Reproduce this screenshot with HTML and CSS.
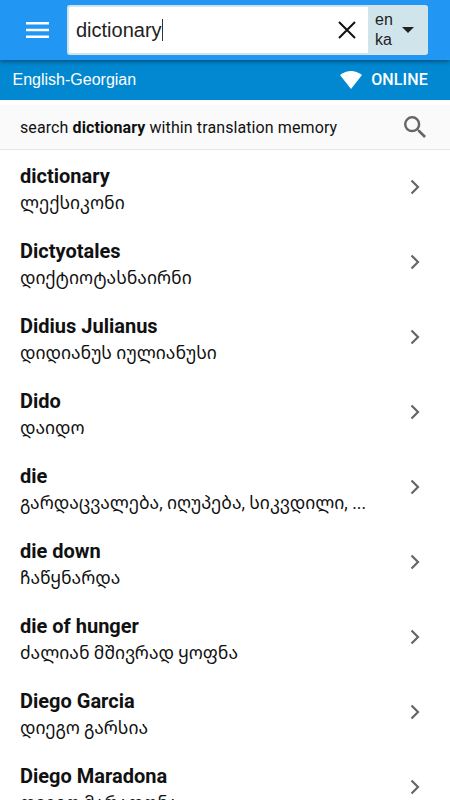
FILE: index.html
```html
<!DOCTYPE html>
<html lang="en">
<head>
<meta charset="utf-8">
<title>Dictionary</title>
<link rel="stylesheet" href="styles.css">
</head>
<body>
<header class="topbar">
  <svg class="menu" viewBox="0 0 23 16"><path d="M0 1.25h23M0 8h23M0 14.75h23"/></svg>
  <div class="search">
    <span class="query">dictionary</span><span class="caret"></span>
    <svg class="clear" viewBox="0 0 18 18"><path d="M1 1l16 16M17 1L1 17"/></svg>
    <div class="langs"><span>en<br>ka</span><i class="arrow"></i></div>
  </div>
</header>
<div class="status">
  <span class="pair">English-Georgian</span>
  <svg class="wifi" viewBox="0 0 22 18"><path d="M0 4Q11-4 22 4L11 18z"/></svg>
  <span class="online">ONLINE</span>
</div>
<div class="memory">
  <span>search <b>dictionary</b> within translation memory</span>
  <svg class="lens" viewBox="3 3 17.5 17.5"><path d="M15.5 14h-.79l-.28-.27A6.471 6.471 0 0 0 16 9.5 6.5 6.5 0 1 0 9.5 16c1.61 0 3.09-.59 4.23-1.57l.27.28v.79l5 4.99L20.49 19l-4.99-5zm-6 0C7.01 14 5 11.99 5 9.5S7.01 5 9.5 5 14 7.01 14 9.5 11.99 14 9.5 14z"/></svg>
</div>
<main class="list">
  <div class="row"><div><h2>dictionary</h2><p>ლექსიკონი</p></div><svg class="chev" viewBox="0 0 10 16"><path d="M1.5 1.5l6.5 6.5-6.5 6.5"/></svg></div>
  <div class="row"><div><h2>Dictyotales</h2><p>დიქტიოტასნაირნი</p></div><svg class="chev" viewBox="0 0 10 16"><path d="M1.5 1.5l6.5 6.5-6.5 6.5"/></svg></div>
  <div class="row"><div><h2>Didius Julianus</h2><p>დიდიანუს იულიანუსი</p></div><svg class="chev" viewBox="0 0 10 16"><path d="M1.5 1.5l6.5 6.5-6.5 6.5"/></svg></div>
  <div class="row"><div><h2>Dido</h2><p>დაიდო</p></div><svg class="chev" viewBox="0 0 10 16"><path d="M1.5 1.5l6.5 6.5-6.5 6.5"/></svg></div>
  <div class="row"><div><h2>die</h2><p>გარდაცვალება, იღუპება, სიკვდილი, ...</p></div><svg class="chev" viewBox="0 0 10 16"><path d="M1.5 1.5l6.5 6.5-6.5 6.5"/></svg></div>
  <div class="row"><div><h2>die down</h2><p>ჩაწყნარდა</p></div><svg class="chev" viewBox="0 0 10 16"><path d="M1.5 1.5l6.5 6.5-6.5 6.5"/></svg></div>
  <div class="row"><div><h2>die of hunger</h2><p>ძალიან მშივრად ყოფნა</p></div><svg class="chev" viewBox="0 0 10 16"><path d="M1.5 1.5l6.5 6.5-6.5 6.5"/></svg></div>
  <div class="row"><div><h2>Diego Garcia</h2><p>დიეგო გარსია</p></div><svg class="chev" viewBox="0 0 10 16"><path d="M1.5 1.5l6.5 6.5-6.5 6.5"/></svg></div>
  <div class="row"><div><h2>Diego Maradona</h2><p>დიეგო მარადონა</p></div><svg class="chev" viewBox="0 0 10 16"><path d="M1.5 1.5l6.5 6.5-6.5 6.5"/></svg></div>
</main>
</body>
</html>
```

FILE: styles.css
```css
* { box-sizing: border-box; margin: 0; padding: 0; }
body { width: 450px; height: 800px; overflow: hidden; background: #fff; color: #111; font-family: Roboto, "Noto Sans", sans-serif; }
svg { flex: none; display: block; }
.topbar { position: relative; z-index: 1; display: flex; align-items: center; height: 60px; padding: 0 22px 0 26px; background: #2196f3; box-shadow: 0 1px 5px rgba(0,0,0,.5); }
.menu { width: 23px; height: 16px; margin-right: 18px; stroke: #fff; stroke-width: 2.3; }
.search { display: flex; align-items: center; flex: 1; height: 50px; padding-left: 7px; background: #fff; border: 2px solid #d0e4ec; border-right: 0; border-radius: 3px; overflow: hidden; }
.query { font: 20px "Liberation Sans", sans-serif; color: #222; }
.caret { width: 1px; height: 22px; background: #333; }
.clear { width: 18px; height: 18px; margin-left: auto; margin-right: 12px; stroke: #111; stroke-width: 2; }
.langs { display: flex; align-items: center; justify-content: space-between; width: 60px; height: 100%; padding: 0 14px 0 7px; background: #d0e4ec; color: #222; font: 16px/20px "Liberation Sans", sans-serif; }
.arrow { border: 6px solid transparent; border-top-color: #222; border-bottom: 0; }
.status { display: flex; align-items: center; height: 40px; padding: 0 22px 0 12.5px; background: #0288d1; color: #fff; font-size: 16px; }
.pair { flex: 1; font-family: "Liberation Sans", sans-serif; }
.wifi { width: 22px; height: 18px; margin-right: 9px; fill: #fff; }
.online { margin-top: -1px; font-weight: 500; letter-spacing: .15px; }
.memory { display: flex; align-items: center; justify-content: space-between; height: 50px; padding: 0 24px 0 20px; background: #fafafa; border-top: 5px solid #fff; border-bottom: 1px solid #e6e6e6; font-size: 16px; letter-spacing: .1px; }
.lens { width: 22px; height: 22px; fill: #666; }
.row { display: flex; align-items: flex-start; justify-content: space-between; height: 75px; padding: 13px 30px 0 20px; }
h2 { font-size: 20px; line-height: 26px; font-weight: 700; }
p { font: 400 17.5px/28px Roboto, "Noto Sans Georgian", "Noto Sans", sans-serif; color: #111; white-space: nowrap; }
.chev { width: 10px; height: 16px; margin-top: 16px; fill: none; stroke: #666; stroke-width: 2.2; }
```
